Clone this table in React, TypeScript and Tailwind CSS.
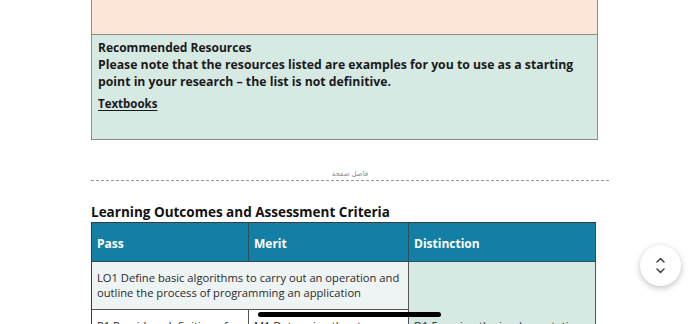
import React from "react";

export default function App() {
  return (
    <div
      className="relative w-[700px] h-[324px] overflow-hidden bg-white text-[#1a1a1a]"
      style={{ fontFamily: '"Open Sans", "Noto Sans", sans-serif' }}
    >
      <div className="ml-[91px] w-[507px] flex flex-col">
        {/* peach block */}
        <div className="h-[35px] bg-[#fbe6d8] border-x border-b border-[#8c8c8c]" />
        {/* recommended resources */}
        <div className="h-[105px] bg-[#d6e9e2] border-x border-b border-[#8c8c8c] pl-[6px] pt-[4px] font-bold text-[12px] leading-[17px]">
          <div>Recommended Resources</div>
          <div className="text-[12.25px]">Please note that the resources listed are examples for you to use as a starting</div>
          <div className="text-[12.25px]">point in your research – the list is not definitive.</div>
          <div className="mt-[5px] underline underline-offset-2 text-[11.5px]">Textbooks</div>
        </div>
      </div>

      {/* page break */}
      <div className="ml-[91px] mt-[29px] w-[518px] flex flex-col items-center">
        <div className="text-[7px] leading-[9px] text-[#888]" style={{ fontFamily: '"Noto Sans", "DejaVu Sans", sans-serif' }}>
          فاصل صفحة
        </div>
        <div className="w-full mt-[2px] border-t border-dashed border-[#999]" />
      </div>

      {/* heading */}
      <div className="ml-[91px] mt-[22px] text-[13.5px] leading-[19px] font-bold text-[#111]">
        Learning Outcomes and Assessment Criteria
      </div>

      {/* table */}
      <div className="ml-[91px] w-[505px] grid grid-cols-[157px_160px_187px] border-l border-t border-[#3a3a3a]">
        <div className="h-[39px] bg-[#137fa4] border-r border-b border-[#2c4f5c] text-white font-bold text-[12px] flex items-center pl-[5px] pt-[3px]">Pass</div>
        <div className="h-[39px] bg-[#137fa4] border-r border-b border-[#2c4f5c] text-white font-bold text-[12px] flex items-center pl-[5px] pt-[3px]">Merit</div>
        <div className="h-[39px] bg-[#137fa4] border-r border-b border-[#2c4f5c] text-white font-bold text-[12px] flex items-center pl-[5px] pt-[3px]">Distinction</div>

        <div className="col-span-2 h-[48px] bg-[#eef3f3] border-r border-b border-[#555] pl-[5px] pt-[8px] text-[11.2px] leading-[15px] text-[#2a2a2a]">
          <div>LO1 Define basic algorithms to carry out an operation and</div>
          <div>outline the process of programming an application</div>
        </div>
        <div className="row-span-2 bg-[#d6e9e2] border-r border-[#555]">
          <div className="h-[48px]" />
          <div className="pl-[5px] pt-[8px] text-[11.2px] leading-[15px] text-[#2a2a2a]">D1 Examine the implementation of an</div>
        </div>
        <div className="h-[40px] bg-white border-r border-[#555] pl-[5px] pt-[8px] text-[11.2px] leading-[15px] text-[#2a2a2a]">P1 Provide a definition of what</div>
        <div className="h-[40px] bg-white border-r border-[#555] pl-[5px] pt-[8px] text-[11.2px] leading-[15px] text-[#2a2a2a]">M1 Determine the steps taken</div>
      </div>

      {/* overlay: scroll indicator bar */}
      <div className="absolute left-[258px] top-[312px] w-[183px] h-[5px] rounded-full bg-black" />

      {/* overlay: up/down button */}
      <div className="absolute left-[640px] top-[245px] w-[41px] h-[41px] rounded-full bg-white shadow-[0_2px_6px_rgba(0,0,0,0.25)] flex flex-col items-center justify-center gap-[5px]">
        <svg width="9" height="6" viewBox="0 0 9 6" fill="none">
          <path d="M1 5 L4.5 1.5 L8 5" stroke="#444" strokeWidth="1.5" strokeLinecap="round" strokeLinejoin="round" />
        </svg>
        <svg width="9" height="6" viewBox="0 0 9 6" fill="none">
          <path d="M1 1 L4.5 4.5 L8 1" stroke="#444" strokeWidth="1.5" strokeLinecap="round" strokeLinejoin="round" />
        </svg>
      </div>
    </div>
  );
}
